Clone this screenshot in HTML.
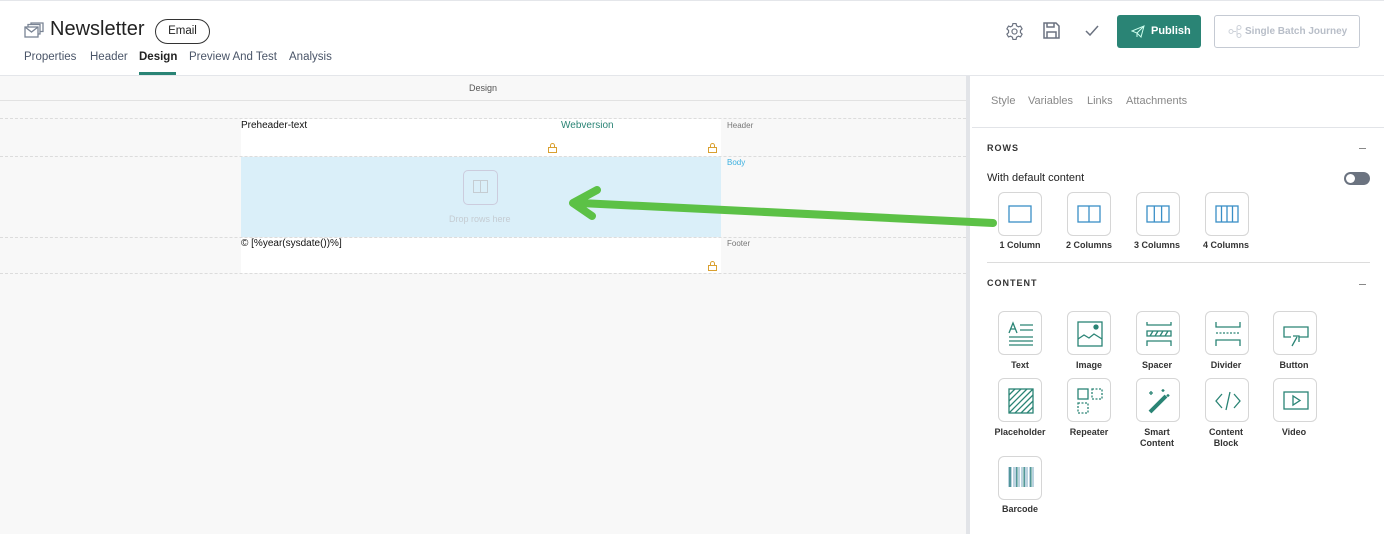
<!DOCTYPE html><html><head><style>
*{box-sizing:border-box;margin:0;padding:0}
body{width:1384px;height:534px;overflow:hidden;font-family:"Liberation Sans",sans-serif;background:#fff;position:relative;color:#333}
.a{position:absolute}
.tab{position:absolute;top:51px;font-size:11.5px;color:#4a5568}
.tile{position:absolute;width:44px;height:44px;border:1px solid #d6d6d6;border-radius:6px;background:#fff}
.tile svg{position:absolute;left:9px;top:9px}
.lbl{position:absolute;width:70px;text-align:center;font-size:9px;font-weight:bold;color:#333;line-height:11px}
.dash{position:absolute;left:0;width:966px;border-top:1px dashed #dcdcdc}
</style></head><body>
<div class="a" style="left:0;top:0;width:1384px;height:1px;background:#e4e6ea"></div>
<svg class="a" style="left:24px;top:22px" width="20" height="16" viewBox="0 0 20 16" fill="none" stroke="#7a8494" stroke-width="1.3"><rect x="1" y="5" width="13" height="10"/><path d="M1 5l6.5 5 6.5-5M4 5V2.5h12V12h-2M7 2.5V1h12v8.5h-3"/></svg>
<div class="a" style="left:50px;top:18px;font-size:20px;color:#222">Newsletter</div>
<div class="a" style="left:155px;top:19px;width:55px;height:25px;border:1px solid #333;border-radius:13px;font-size:11.5px;text-align:center;line-height:23px;color:#222">Email</div>
<div class="tab" style="left:24px">Properties</div>
<div class="tab" style="left:90px">Header</div>
<div class="tab" style="left:139px;font-weight:bold;color:#222">Design</div>
<div class="a" style="left:139px;top:72px;width:37px;height:3px;background:#2a8475"></div>
<div class="tab" style="left:189px">Preview And Test</div>
<div class="tab" style="left:289px">Analysis</div>
<svg class="a" style="left:1005px;top:22px" width="19" height="19" viewBox="0 0 24 24" fill="none" stroke="#6b7280" stroke-width="1.5"><circle cx="12" cy="12" r="3.2"/><path d="M10 2h4l.6 2.8 2.3 1.3 2.7-.9 2 3.5-2.1 1.9v2.8l2.1 1.9-2 3.5-2.7-.9-2.3 1.3L14 22h-4l-.6-2.8-2.3-1.3-2.7.9-2-3.5 2.1-1.9v-2.8L2.4 8.7l2-3.5 2.7.9 2.3-1.3z"/></svg>
<svg class="a" style="left:1043px;top:22px" width="17" height="17" viewBox="0 0 17 17" fill="none" stroke="#6b7280" stroke-width="1.5"><path d="M1 1h12l3 3v12H1z"/><path d="M4 1v4h7V1M4 16v-6h9v6"/></svg>
<svg class="a" style="left:1085px;top:25px" width="14" height="11" viewBox="0 0 14 11" fill="none" stroke="#6b7280" stroke-width="1.5"><path d="M1 6l4 4 8-9"/></svg>
<div class="a" style="left:1117px;top:15px;width:84px;height:33px;background:#2a8475;border-radius:3px;color:#fff;font-size:11px;font-weight:bold;line-height:33px;padding-left:34px">Publish</div>
<svg class="a" style="left:1131px;top:25px" width="14" height="13" viewBox="0 0 14 13" fill="none" stroke="#cfe" stroke-width="1"><path d="M1 6l12-5-3 11-4-4zM6 8l7-7M6 8v4"/></svg>
<div class="a" style="left:1214px;top:15px;width:146px;height:33px;border:1px solid #c5cad3;border-radius:3px;color:#b8bec8;font-size:10px;font-weight:bold;line-height:31px;padding-left:30px">Single Batch Journey</div>
<svg class="a" style="left:1228px;top:25px" width="14" height="13" fill="none" stroke="#cdd2d9" stroke-width="1"><circle cx="3" cy="6.5" r="2"/><circle cx="11" cy="2.5" r="2"/><circle cx="11" cy="10.5" r="2"/><path d="M5 6.5h3M9 2.5v8"/></svg>
<div class="a" style="left:0;top:75px;width:1384px;height:1px;background:#e4e6ea"></div>
<div class="a" style="left:0;top:76px;width:966px;height:458px;background:#f8f8f8"></div>
<div class="a" style="left:0;top:76px;width:966px;height:25px;border-bottom:1px solid #e2e2e2;font-size:9px;color:#555;text-align:center;line-height:24px">Design</div>
<div class="a" style="left:966px;top:76px;width:4px;height:458px;background:#e2e4e8"></div>
<div class="a" style="left:241px;top:119px;width:480px;height:37px;background:#fff"></div>
<div class="a" style="left:241px;top:157px;width:480px;height:80px;background:#daeff9"></div>
<div class="a" style="left:241px;top:238px;width:480px;height:35px;background:#fff"></div>
<div class="dash" style="top:118px"></div><div class="dash" style="top:156px"></div><div class="dash" style="top:237px"></div><div class="dash" style="top:273px"></div>
<div class="a" style="left:241px;top:120px;font-size:10px;color:#111">Preheader-text</div>
<div class="a" style="left:561px;top:120px;font-size:10px;color:#2a8475">Webversion</div>
<div class="a" style="left:241px;top:238px;font-size:10px;color:#111">© [%year(sysdate())%]</div>
<div class="a" style="left:727px;top:121px;font-size:8px;color:#777">Header</div>
<div class="a" style="left:727px;top:158px;font-size:8px;color:#3bb0e0">Body</div>
<div class="a" style="left:727px;top:239px;font-size:8px;color:#777">Footer</div>
<svg class="a" style="left:548px;top:143px" width="9" height="10" fill="none" stroke="#d9a030" stroke-width="1"><rect x=".5" y="4.5" width="8" height="5"/><path d="M2.5 4.5V2.5a2 2 0 014 0v2"/></svg>
<svg class="a" style="left:708px;top:143px" width="9" height="10" fill="none" stroke="#d9a030" stroke-width="1"><rect x=".5" y="4.5" width="8" height="5"/><path d="M2.5 4.5V2.5a2 2 0 014 0v2"/></svg>
<svg class="a" style="left:708px;top:261px" width="9" height="10" fill="none" stroke="#d9a030" stroke-width="1"><rect x=".5" y="4.5" width="8" height="5"/><path d="M2.5 4.5V2.5a2 2 0 014 0v2"/></svg>
<div class="a" style="left:463px;top:170px;width:35px;height:35px;border:1px solid #ccd;border-radius:5px"></div>
<svg class="a" style="left:473px;top:180px" width="15" height="13" fill="none" stroke="#c5ccd2"><rect x=".5" y=".5" width="14" height="12"/><path d="M7.5 0v13"/></svg>
<div class="a" style="left:449px;top:214px;font-size:9px;color:#c5ccd2">Drop rows here</div>
<div class="a" style="left:991px;top:95px;font-size:11px;color:#888">Style</div>
<div class="a" style="left:1028px;top:95px;font-size:11px;color:#888">Variables</div>
<div class="a" style="left:1087px;top:95px;font-size:11px;color:#888">Links</div>
<div class="a" style="left:1126px;top:95px;font-size:11px;color:#888">Attachments</div>
<div class="a" style="left:972px;top:127px;width:412px;height:1px;background:#e2e4e8"></div>
<div class="a" style="left:987px;top:143px;font-size:9px;font-weight:bold;letter-spacing:1px;color:#333">ROWS</div>
<div class="a" style="left:1359px;top:148px;width:7px;height:1px;background:#888"></div>
<div class="a" style="left:987px;top:172px;font-size:11px;color:#222">With default content</div>
<div class="a" style="left:1344px;top:172px;width:26px;height:13px;border-radius:7px;background:#6b7380"></div>
<div class="a" style="left:1346px;top:174px;width:9px;height:9px;border-radius:50%;background:#fff"></div>
<div class="tile" style="left:998px;top:192px"><svg width="24" height="24" fill="none" stroke="#3a8fc7" stroke-width="1.3"><rect x="1" y="4" width="22" height="16"/></svg></div>
<div class="tile" style="left:1067px;top:192px"><svg width="24" height="24" fill="none" stroke="#3a8fc7" stroke-width="1.3"><rect x="1" y="4" width="22" height="16"/><path d="M12 4v16"/></svg></div>
<div class="tile" style="left:1136px;top:192px"><svg width="24" height="24" fill="none" stroke="#3a8fc7" stroke-width="1.3"><rect x="1" y="4" width="22" height="16"/><path d="M8.3 4v16M15.6 4v16"/></svg></div>
<div class="tile" style="left:1205px;top:192px"><svg width="24" height="24" fill="none" stroke="#3a8fc7" stroke-width="1.3"><rect x="1" y="4" width="22" height="16"/><path d="M6.5 4v16M12 4v16M17.5 4v16"/></svg></div>
<div class="lbl" style="left:985px;top:240px">1 Column</div>
<div class="lbl" style="left:1054px;top:240px">2 Columns</div>
<div class="lbl" style="left:1122px;top:240px">3 Columns</div>
<div class="lbl" style="left:1191px;top:240px">4 Columns</div>
<div class="a" style="left:987px;top:262px;width:383px;height:1px;background:#dcdcdc"></div>
<div class="a" style="left:987px;top:278px;font-size:9px;font-weight:bold;letter-spacing:1px;color:#333">CONTENT</div>
<div class="a" style="left:1359px;top:284px;width:7px;height:1px;background:#888"></div>
<div class="tile" style="left:998px;top:311px"><svg width="26" height="26" fill="none" stroke="#2a8475" stroke-width="1.3"><path d="M1 12l4-10 4 10M2.5 8h5M12 4h13M12 9h13M1 16h24M1 20h24M1 24h24"/></svg></div>
<div class="tile" style="left:1067px;top:311px"><svg width="26" height="26" fill="none" stroke="#2a8475" stroke-width="1.3"><rect x="1" y="1" width="24" height="24"/><path d="M1 18l6-4 5 3 5-4 8 5"/><circle cx="19" cy="6" r="2" fill="#2a8475"/></svg></div>
<div class="tile" style="left:1136px;top:311px"><svg width="26" height="26" fill="none" stroke="#2a8475" stroke-width="1.3"><path d="M1 1v3h24V1M1 25v-5h24v5M1 10h24v5H1z M4 15l3-5M9 15l3-5M14 15l3-5M19 15l3-5"/></svg></div>
<div class="tile" style="left:1205px;top:311px"><svg width="26" height="26" fill="none" stroke="#2a8475" stroke-width="1.3"><path d="M1 1v5h24V1M1 25v-6h24v6"/><path d="M1 12h24" stroke-dasharray="2 1.5"/></svg></div>
<div class="tile" style="left:1273px;top:311px"><svg width="26" height="26" fill="none" stroke="#2a8475" stroke-width="1.3"><path d="M8 16H1V6h24v10h-9M9 25l5-9M10 15h6v6"/></svg></div>
<div class="lbl" style="left:985px;top:360px">Text</div>
<div class="lbl" style="left:1054px;top:360px">Image</div>
<div class="lbl" style="left:1122px;top:360px">Spacer</div>
<div class="lbl" style="left:1191px;top:360px">Divider</div>
<div class="lbl" style="left:1259px;top:360px">Button</div>
<div class="tile" style="left:998px;top:378px"><svg width="26" height="26" fill="none" stroke="#2a8475" stroke-width="1.3"><rect x="1" y="1" width="24" height="24"/><path d="M1 7l6-6M1 13l12-12M1 19l18-18M1 25l24-24M7 25l18-18M13 25l12-12M19 25l6-6"/></svg></div>
<div class="tile" style="left:1067px;top:378px"><svg width="26" height="26" fill="none" stroke="#2a8475" stroke-width="1.3"><rect x="1" y="1" width="10" height="10"/><rect x="15" y="1" width="10" height="10" stroke-dasharray="2 1.5"/><rect x="1" y="15" width="10" height="10" stroke-dasharray="2 1.5"/></svg></div>
<div class="tile" style="left:1136px;top:378px"><svg width="26" height="26" fill="none" stroke="#2a8475" stroke-width="1.3"><path d="M4 24L20 8" stroke-width="4"/><path d="M5 3v4M3 5h4M17 1v3M15.5 2.5h3M22 6v3M20.5 7.5h3"/></svg></div>
<div class="tile" style="left:1205px;top:378px"><svg width="26" height="26" fill="none" stroke="#2a8475" stroke-width="1.3"><path d="M7 6l-6 7 6 7M19 6l6 7-6 7M15 4l-4 18"/></svg></div>
<div class="tile" style="left:1273px;top:378px"><svg width="26" height="26" fill="none" stroke="#2a8475" stroke-width="1.3"><rect x="1" y="4" width="24" height="17"/><path d="M10 8v9l7-4.5z"/></svg></div>
<div class="lbl" style="left:985px;top:427px">Placeholder</div>
<div class="lbl" style="left:1054px;top:427px">Repeater</div>
<div class="lbl" style="left:1122px;top:427px">Smart<br>Content</div>
<div class="lbl" style="left:1191px;top:427px">Content<br>Block</div>
<div class="lbl" style="left:1259px;top:427px">Video</div>
<div class="tile" style="left:998px;top:456px"><svg width="26" height="26" fill="none" stroke-width="1"><path d="M1 1v20M3 1v20M6 1v20M8 1v20M11 1v20M14 1v20M17 1v20M19 1v20M22 1v20M25 1v20" stroke="#7aa7c0"/><path d="M2 1v20M9 1v20M16 1v20M23 1v20" stroke="#2a8475"/></svg></div>
<div class="lbl" style="left:985px;top:504px">Barcode</div>
<svg class="a" style="left:0;top:0" width="1384" height="534"><path d="M993 223L580 203M597 190L573 203L592 216" fill="none" stroke="#5cc146" stroke-width="8" stroke-linecap="round" stroke-linejoin="round"/></svg>
</body></html>
